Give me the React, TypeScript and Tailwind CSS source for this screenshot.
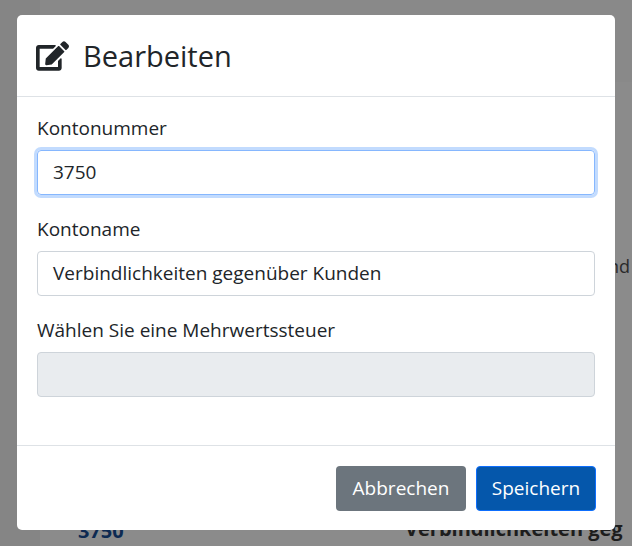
import React from "react";

export default function App() {
  const font = { fontFamily: '"Open Sans", "Noto Sans", sans-serif' };
  return (
    <div className="relative w-[632px] h-[546px] overflow-hidden bg-[#898989]" style={font}>
      {/* underlying page, dimmed */}
      <div className="absolute left-0 top-0 w-[40px] h-[546px] bg-[#858585]" />
      <div className="absolute left-[40px] top-[82px] right-0 h-[464px] bg-[#8b8b8b]" />
      <div className="absolute left-[608px] top-[253px] text-[18px] text-[#2a2a2a]">nd</div>
      <div className="absolute left-[78px] top-[516px] text-[20px] font-bold text-[#0d2a52]">3750</div>
      <div className="absolute left-[405px] top-[514px] text-[20px] font-bold text-[#1d1d1d] whitespace-nowrap">Verbindlichkeiten geg</div>

      <div className="absolute left-[17px] top-[15px] w-[598px] h-[515px] bg-white rounded-[5px] flex flex-col">
        <div className="h-[82px] flex items-center gap-[14px] px-[19px] border-b border-[#dee2e6]">
          <svg width="33" height="30" viewBox="0 0 576 512" fill="#212529">
            <path d="M402.6 83.2l90.2 90.2c3.8 3.8 3.8 10 0 13.8L274.4 405.6l-92.8 10.3c-12.4 1.4-22.9-9.1-21.5-21.5l10.3-92.8L388.8 83.2c3.8-3.8 10-3.8 13.8 0zm162-22.9l-48.8-48.8c-15.2-15.2-39.9-15.2-55.2 0l-35.4 35.4c-3.8 3.8-3.8 10 0 13.8l90.2 90.2c3.8 3.8 10 3.8 13.8 0l35.4-35.4c15.2-15.3 15.2-40 0-55.2zM384 346.2V448H64V128h229.8c3.2 0 6.2-1.300 8.500-3.500l40-40c7.600-7.600 2.200-20.500-8.500-20.500H48C21.500 64 0 85.500 0 112v352c0 26.500 21.500 48 48 48h352c26.500 0 48-21.500 48-48V306.200c0-10.700-12.900-16-20.500-8.500l-40 40c-2.200 2.300-3.500 5.300-3.500 8.500z" />
          </svg>
          <span className="text-[29px] text-[#212529]">Bearbeiten</span>
        </div>
        <div className="flex-1 px-[20px] pt-[18px] flex flex-col border-b border-[#dee2e6]">
          <label className="text-[19px] leading-[26px] text-[#212529] mb-[9px]">Kontonummer</label>
          <div className="h-[45px] rounded-[4px] border border-[#86b7fe] shadow-[0_0_0_3px_rgba(13,110,253,0.25)] flex items-center px-[15px] text-[19px] text-[#212529]">3750</div>
          <label className="text-[19px] leading-[26px] text-[#212529] mt-[21px] mb-[9px]">Kontoname</label>
          <div className="h-[45px] rounded-[4px] border border-[#ced4da] flex items-center px-[15px] text-[19px] text-[#212529]">Verbindlichkeiten gegenüber Kunden</div>
          <label className="text-[19px] leading-[26px] text-[#212529] mt-[21px] mb-[9px]">Wählen Sie eine Mehrwertssteuer</label>
          <div className="h-[45px] rounded-[4px] border border-[#ced4da] bg-[#e9ecef]" />
        </div>
        <div className="h-[84px] flex items-center justify-end gap-[10px] px-[19px]">
          <button className="h-[45px] w-[130px] rounded-[4px] bg-[#6c757d] text-white text-[19px]">Abbrechen</button>
          <button className="h-[45px] w-[120px] rounded-[4px] bg-[#0557ab] border border-[#0d6efd] text-white text-[19px]">Speichern</button>
        </div>
      </div>
    </div>
  );
}
